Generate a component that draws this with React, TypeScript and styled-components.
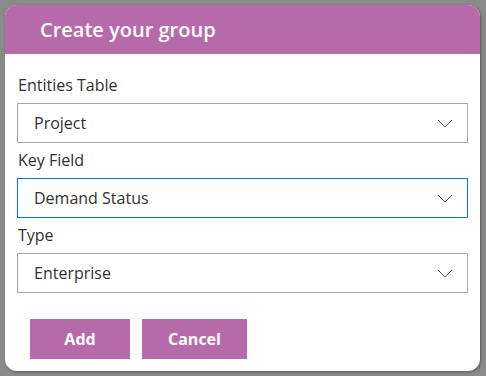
import React from "react";
import styled, { createGlobalStyle } from "styled-components";

const GlobalStyle = createGlobalStyle`
  html, body {
    margin: 0;
    padding: 0;
    background: #8a8a8a;
    font-family: "Open Sans", "Noto Sans", sans-serif;
  }
`;

const Backdrop = styled.div`
  width: 486px;
  height: 376px;
  padding: 5px 6px 5px 5px;
  box-sizing: border-box;
`;

const Dialog = styled.div`
  width: 475px;
  height: 366px;
  background: #ffffff;
  border-radius: 12px;
  overflow: hidden;
  box-shadow: 1px 1px 3px rgba(0, 0, 0, 0.35);
  display: flex;
  flex-direction: column;
`;

const Header = styled.div`
  height: 49px;
  background: #b76aaa;
  display: flex;
  align-items: center;
  padding-left: 35px;
  flex-shrink: 0;
`;

const Title = styled.h1`
  margin: 0;
  color: #ffffff;
  font-size: 20px;
  font-weight: 600;
`;

const Body = styled.div`
  padding: 13px 12px 0 12px;
  display: flex;
  flex-direction: column;
`;

const Label = styled.label`
  height: 36px;
  line-height: 36px;
  font-size: 16px;
  color: #323130;
  padding-left: 1px;
  &:not(:first-child) {
    height: 35px;
    line-height: 35px;
  }
`;

const Select = styled.div<{ $focused?: boolean }>`
  height: 40px;
  box-sizing: border-box;
  border: 1px solid ${(p) => (p.$focused ? "#0078d4" : "#a6a6a6")};
  display: flex;
  align-items: center;
  justify-content: space-between;
  padding: 0 14px 0 16px;
  font-size: 16px;
  color: #323130;
`;

const Chevron = styled.svg`
  width: 16px;
  height: 9px;
`;

const Actions = styled.div`
  display: flex;
  gap: 12px;
  padding-left: 13px;
  margin-top: 26px;
`;

const Button = styled.button`
  height: 40px;
  min-width: 100px;
  padding: 0 26px;
  border: none;
  background: #b76aaa;
  color: #ffffff;
  font-family: "Open Sans", "Noto Sans", sans-serif;
  font-size: 16px;
  font-weight: 700;
  cursor: pointer;
`;

const ChevronDown = () => (
  <Chevron viewBox="0 0 16 9">
    <path d="M1 1 L8 8 L15 1" fill="none" stroke="#605e5c" strokeWidth="1" />
  </Chevron>
);

const fields = [
  { label: "Entities Table", value: "Project" },
  { label: "Key Field", value: "Demand Status", focused: true },
  { label: "Type", value: "Enterprise" },
];

export default function App() {
  return (
    <>
      <GlobalStyle />
      <Backdrop>
        <Dialog>
          <Header>
            <Title>Create your group</Title>
          </Header>
          <Body>
            {fields.map((f) => (
              <React.Fragment key={f.label}>
                <Label>{f.label}</Label>
                <Select $focused={f.focused}>
                  <span>{f.value}</span>
                  <ChevronDown />
                </Select>
              </React.Fragment>
            ))}
            <Actions>
              <Button>Add</Button>
              <Button>Cancel</Button>
            </Actions>
          </Body>
        </Dialog>
      </Backdrop>
    </>
  );
}
